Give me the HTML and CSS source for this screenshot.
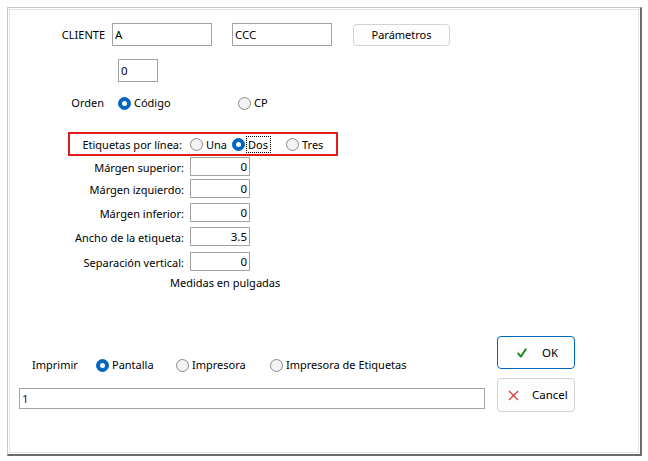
FILE: index.html
```html
<!DOCTYPE html>
<html lang="es">
<head>
<meta charset="utf-8">
<title>Etiquetas</title>
<link rel="stylesheet" href="styles.css">
</head>
<body>
<div class="frame">
  <div class="inner">
    <div class="row row-cliente">
      <span class="lbl lbl-cliente">CLIENTE</span>
      <input class="input input-a" type="text" value="A">
      <input class="input input-ccc" type="text" value="CCC">
      <button class="btn btn-param" type="button">Parámetros</button>
    </div>
    <div class="row row-zero">
      <input class="input input-zero" type="text" value="0">
    </div>
    <div class="row row-orden">
      <span class="lbl lbl-orden">Orden</span>
      <span class="opt opt-codigo"><span class="radio on"></span>Código</span>
      <span class="opt"><span class="radio"></span>CP</span>
    </div>
    <div class="etiq-box">
      <span class="lbl lbl-etiq">Etiquetas por línea:</span>
      <span class="opt opt-una"><span class="radio"></span>Una</span>
      <span class="opt opt-dos"><span class="radio on"></span><span class="focus">Dos</span></span>
      <span class="opt"><span class="radio"></span>Tres</span>
    </div>
    <div class="field f1"><span class="flbl">Márgen superior:</span><input class="input num" type="text" value="0"></div>
    <div class="field f2"><span class="flbl">Márgen izquierdo:</span><input class="input num" type="text" value="0"></div>
    <div class="field f3"><span class="flbl">Márgen inferior:</span><input class="input num" type="text" value="0"></div>
    <div class="field f4"><span class="flbl">Ancho de la etiqueta:</span><input class="input num" type="text" value="3.5"></div>
    <div class="field f5"><span class="flbl">Separación vertical:</span><input class="input num" type="text" value="0"></div>
    <div class="medidas">Medidas en pulgadas</div>
    <div class="bottom">
      <div class="left-col">
        <div class="row row-imprimir">
          <span class="lbl lbl-imprimir">Imprimir</span>
          <span class="opt opt-pantalla"><span class="radio on"></span>Pantalla</span>
          <span class="opt opt-impresora"><span class="radio"></span>Impresora</span>
          <span class="opt"><span class="radio"></span>Impresora de Etiquetas</span>
        </div>
        <input class="input input-one" type="text" value="1">
      </div>
      <div class="actions">
        <button class="btn btn-ok" type="button">
          <svg class="ico ico-check" width="10" height="10" viewBox="0 0 10 10"><path d="M1.2 5.4 L3.8 8.6 L8.8 1.2" fill="none" stroke="#178a17" stroke-width="1.9" stroke-linecap="round" stroke-linejoin="round"/></svg>
          <span>OK</span>
        </button>
        <button class="btn btn-cancel" type="button">
          <svg class="ico ico-x" width="11" height="11" viewBox="0 0 11 11"><path d="M1 1 L10 10 M10 1 L1 10" fill="none" stroke="#d83b3b" stroke-width="1.3"/></svg>
          <span>Cancel</span>
        </button>
      </div>
    </div>
  </div>
</div>
</body>
</html>
```

FILE: styles.css
```css
html, body {
  margin: 0;
  padding: 0;
  background: #ffffff;
}

body {
  font-family: "Noto Sans", "Open Sans", sans-serif;
  font-size: 11px;
  line-height: 16px;
  color: #000000;
}

.frame {
  box-sizing: border-box;
  margin: 7px 0 0 7px;
  width: 635px;
  height: 449px;
  border-style: solid;
  border-width: 1px 2px 2px 1px;
  border-color: #c6c6c6 #6b6b6b #6b6b6b #c6c6c6;
  padding: 1px;
  background: #ffffff;
}

.inner {
  box-sizing: border-box;
  height: 100%;
  border: 1px solid #e3e3e3;
}

.row {
  display: flex;
  align-items: center;
}

.lbl {
  box-sizing: border-box;
  white-space: nowrap;
  flex: none;
}

.input {
  box-sizing: border-box;
  margin: 0;
  border: 1px solid #a3a3a3;
  border-radius: 0;
  background: #ffffff;
  font: inherit;
  font-size: 11.5px;
  color: #000000;
  padding: 0 2px;
  outline: none;
  flex: none;
}

.btn {
  box-sizing: border-box;
  margin: 0;
  font: inherit;
  color: #000000;
  background: #fdfdfd;
  border: 1px solid #d3d3d3;
  border-radius: 4px;
  padding: 0;
  flex: none;
}

/* Row: CLIENTE */
.row-cliente {
  margin-top: 13px;
  height: 23px;
}

.lbl-cliente {
  width: 102px;
  text-align: right;
  padding-right: 7px;
}

.input-a,
.input-ccc {
  width: 100px;
  height: 23px;
}

.input-ccc {
  margin-left: 20px;
}

.btn-param {
  margin-left: 21px;
  width: 97px;
  height: 22px;
}

/* Row: 0 */
.row-zero {
  margin-top: 13px;
  padding-left: 108px;
}

.input-zero {
  width: 40px;
  height: 23px;
}

/* Row: Orden */
.row-orden {
  margin-top: 12px;
  height: 16px;
  padding-top: 1px;
}

.lbl-orden {
  width: 108px;
  text-align: right;
  padding-right: 14px;
}

.opt {
  display: inline-flex;
  align-items: center;
  white-space: nowrap;
  flex: none;
}

.opt-codigo {
  width: 120px;
}

.radio {
  box-sizing: border-box;
  display: inline-block;
  position: relative;
  width: 13px;
  height: 13px;
  border-radius: 50%;
  border: 1px solid #8a8a8a;
  background: #f3f3f3;
  margin-right: 3px;
  flex: none;
}

.radio.on {
  background: #0067c0;
  border-color: #0067c0;
}

.radio.on::after {
  content: "";
  position: absolute;
  left: 3px;
  top: 3px;
  width: 5px;
  height: 5px;
  border-radius: 50%;
  background: #ffffff;
}

/* Etiquetas box */
.etiq-box {
  box-sizing: border-box;
  display: flex;
  align-items: center;
  margin-top: 21px;
  margin-left: 58px;
  width: 270px;
  height: 24px;
  border: 2px solid #e21b1b;
  padding-top: 1px;
}

.lbl-etiq {
  width: 120px;
  text-align: right;
  padding-right: 8px;
}

.opt-una {
  width: 42px;
}

.opt-dos {
  width: 54px;
}

.focus {
  display: inline-block;
  line-height: 13px;
  outline: 1px dotted #000000;
  outline-offset: 1px;
  padding: 0 1px 0 0;
}

/* Fields */
.field {
  display: flex;
  align-items: center;
  height: 19px;
}

.f1 { margin-top: 1px; }
.f2 { margin-top: 3px; }
.f3 { margin-top: 5px; }
.f4 { margin-top: 5px; }
.f5 { margin-top: 6px; }

.flbl {
  box-sizing: border-box;
  width: 180px;
  text-align: right;
  padding-right: 6px;
  padding-top: 2px;
  white-space: nowrap;
  flex: none;
}

.num {
  width: 60px;
  height: 19px;
  text-align: right;
  padding-right: 2px;
}

.medidas {
  margin-top: 4px;
  margin-left: 160px;
}

/* Bottom */
.bottom {
  display: flex;
  margin-top: 45px;
  margin-left: 9px;
}

.left-col {
  width: 466px;
  padding-top: 21px;
  flex: none;
}

.row-imprimir {
  height: 16px;
}

.lbl-imprimir {
  width: 77px;
  padding-left: 13px;
}

.opt-pantalla {
  width: 80px;
}

.opt-impresora {
  width: 94px;
}

.input-one {
  display: block;
  margin-top: 15px;
  width: 466px;
  height: 21px;
  color: #3a0a55;
}

.actions {
  margin-left: 12px;
  display: flex;
  flex-direction: column;
  gap: 9px;
}

.btn-ok,
.btn-cancel {
  display: flex;
  align-items: center;
  width: 78px;
  height: 33px;
  font-size: 11.5px;
}

.btn-ok {
  border-color: #0067c0;
  padding-left: 19px;
}

.btn-ok .ico {
  margin-right: 15px;
}

.btn-cancel {
  height: 34px;
  padding-left: 10px;
}

.btn-cancel .ico {
  margin-right: 13px;
}

.ico {
  display: block;
  flex: none;
}
```
